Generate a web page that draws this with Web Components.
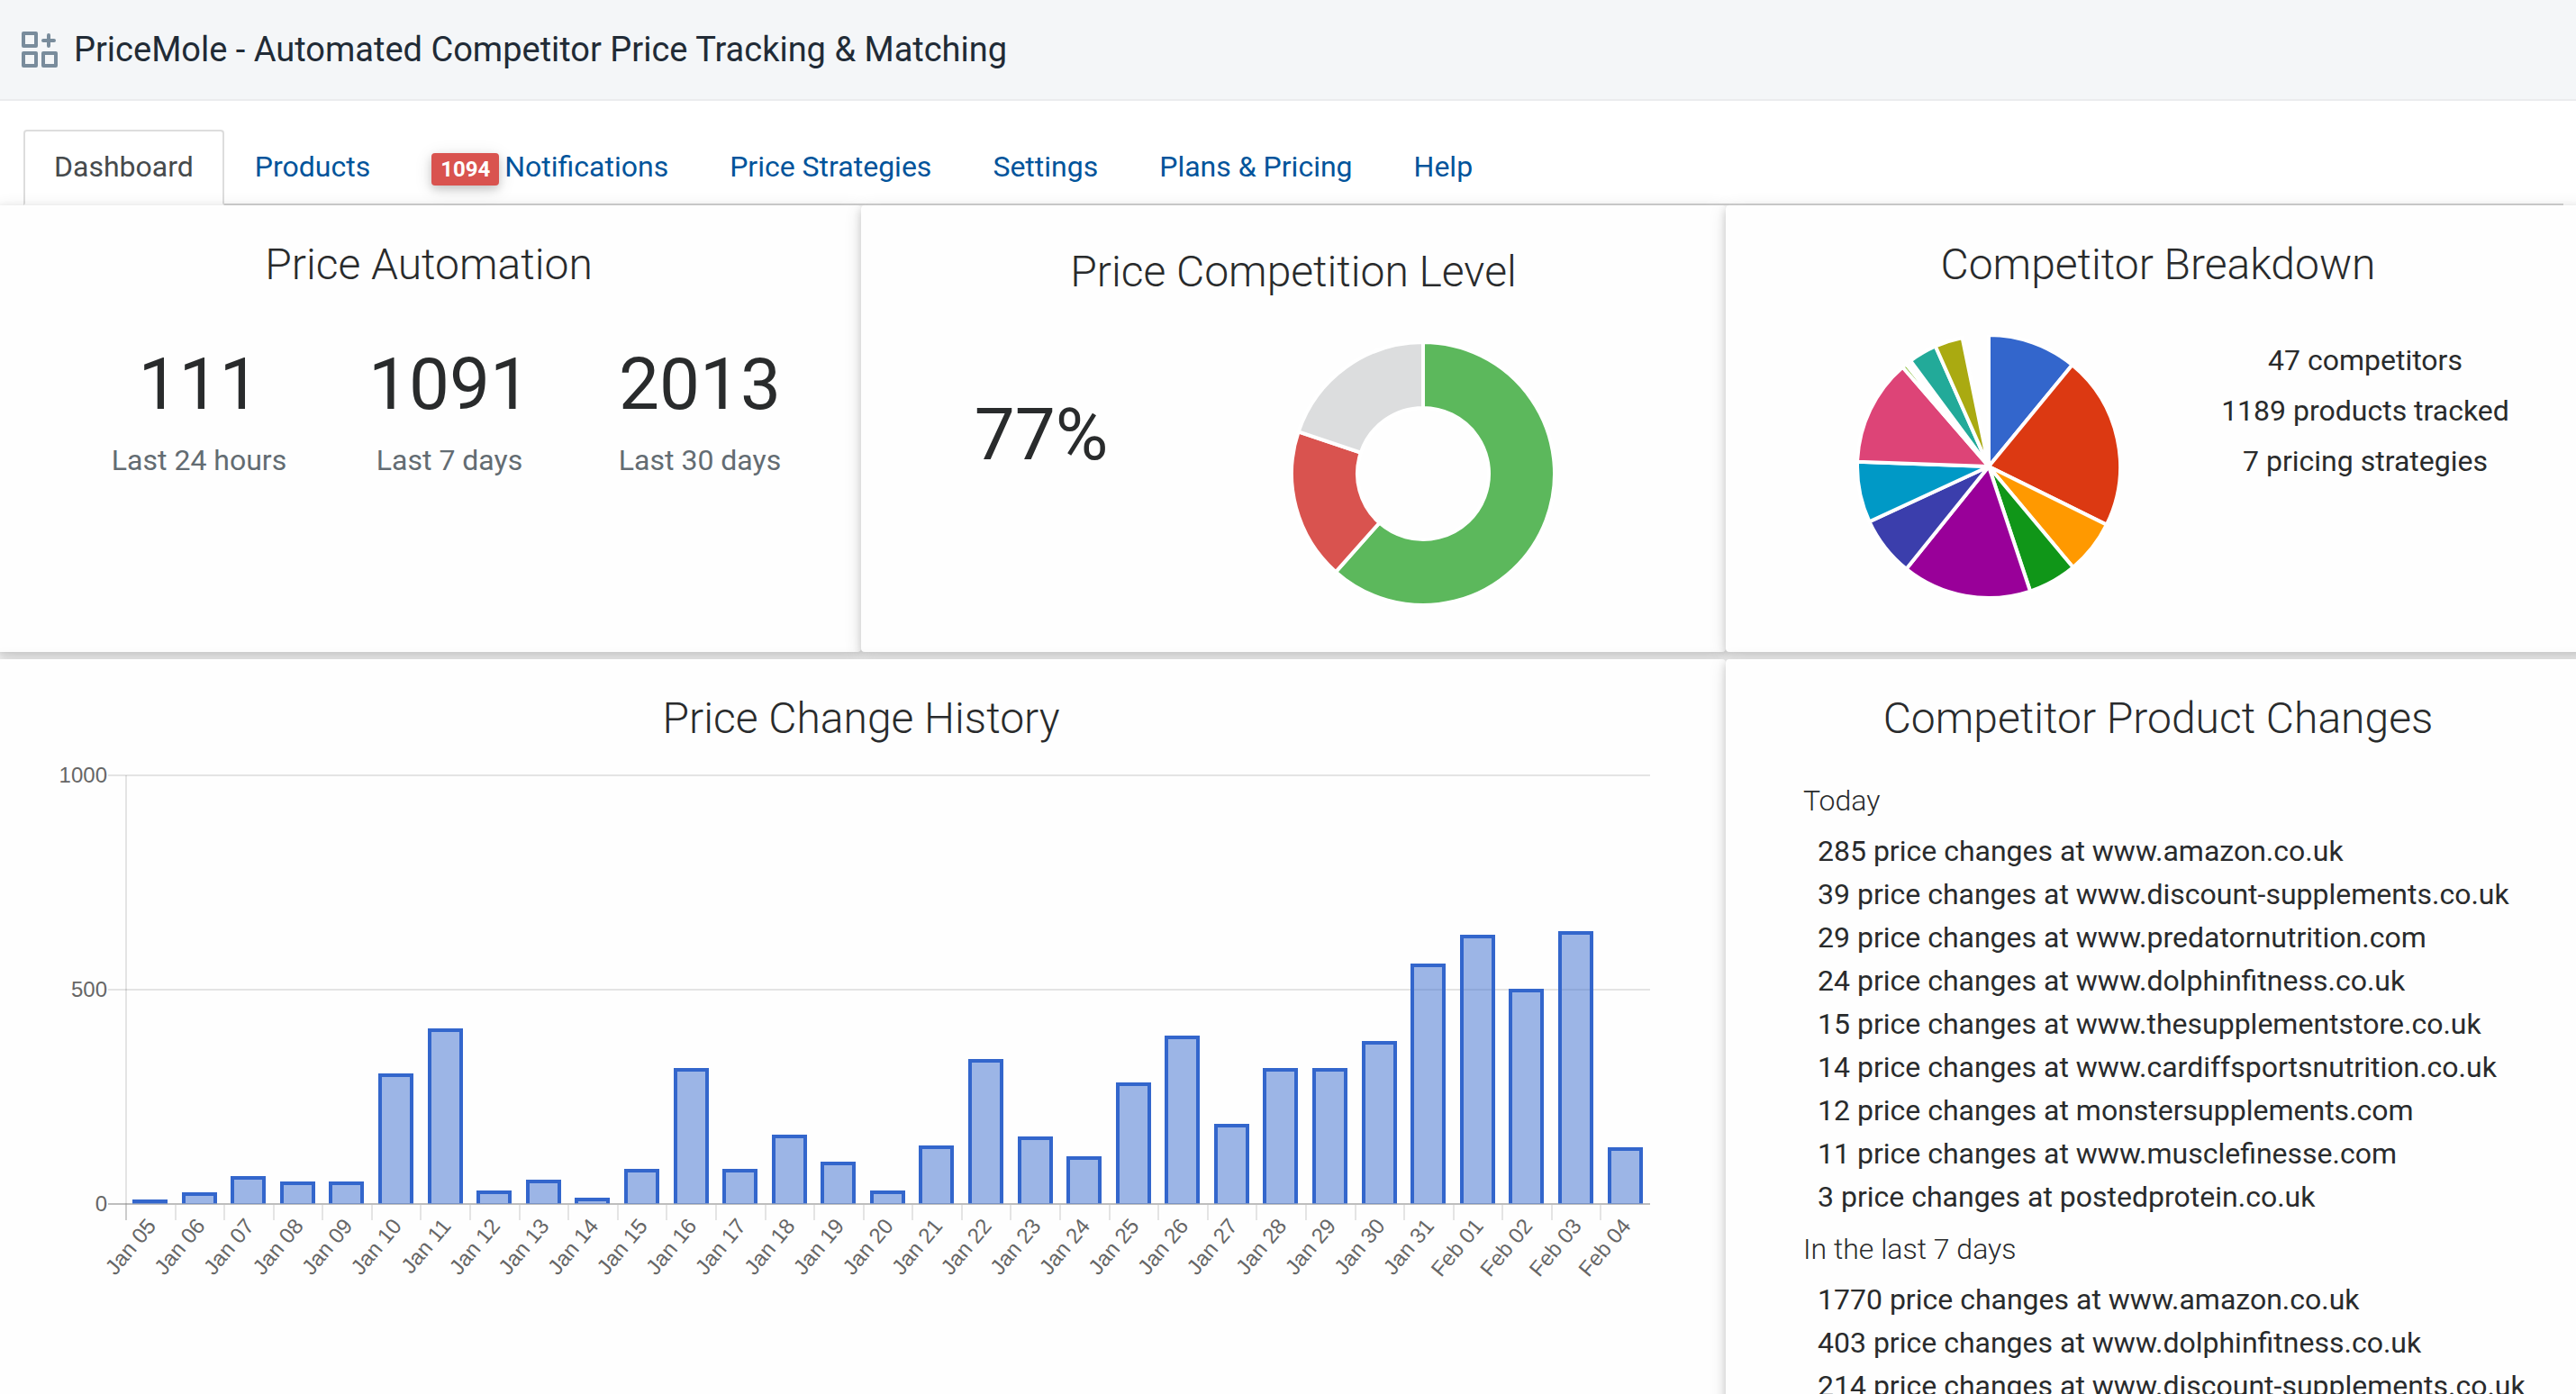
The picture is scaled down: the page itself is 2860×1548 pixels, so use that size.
<!DOCTYPE html>
<html lang="en">
<head>
<meta charset="utf-8">
<title>PriceMole</title>
<style>
  body {
    margin: 0;
    background: #fff;
    color: #292b2c;
    font-family: Roboto, "Liberation Sans", sans-serif;
    font-size: 32px;
    line-height: 48px;
  }
</style>
</head>
<body>
<price-app>
  <app-header slot="header">PriceMole - Automated Competitor Price Tracking &amp; Matching</app-header>
  <nav-tabs slot="nav">
    <nav-tab href="#dashboard" active>Dashboard</nav-tab>
    <nav-tab href="#products">Products</nav-tab>
    <nav-tab href="#notifications" badge="1094">Notifications</nav-tab>
    <nav-tab href="#strategies">Price Strategies</nav-tab>
    <nav-tab href="#settings">Settings</nav-tab>
    <nav-tab href="#plans">Plans &amp; Pricing</nav-tab>
    <nav-tab href="#help">Help</nav-tab>
  </nav-tabs>

  <dash-card heading="Price Automation">
    <stat-row>
      <stat-figure value="111">Last 24 hours</stat-figure>
      <stat-figure value="1091">Last 7 days</stat-figure>
      <stat-figure value="2013">Last 30 days</stat-figure>
    </stat-row>
  </dash-card>

  <dash-card heading="Price Competition Level" class="level">
    <competition-level>
      <stat-figure value="77%"></stat-figure>
      <pie-chart slot="chart" label="Price competition level" hole="73"
        stops="0 221.6 #5cb85c, 221.6 288.6 #d9534f, 288.6 360 #dcddde"></pie-chart>
    </competition-level>
  </dash-card>

  <dash-card heading="Competitor Breakdown">
    <competitor-breakdown>
      <pie-chart slot="chart" label="Competitor breakdown"
        stops="0 39.4 #3366cc, 39.4 116.3 #dc3912, 116.3 140.1 #ff9900, 140.1 161.6 #109618, 161.6 218.8 #990099, 218.8 245.2 #3b3eac, 245.2 272.1 #0099c6, 272.1 319.1 #dd4477, 319.1 321 #66aa00, 323.5 336.1 #22aa99, 336.1 348.4 #aaaa11"></pie-chart>
      <span>47 competitors</span>
      <span>1189 products tracked</span>
      <span>7 pricing strategies</span>
    </competitor-breakdown>
  </dash-card>

  <dash-card heading="Price Change History" class="wide">
    <bar-chart></bar-chart>
  </dash-card>

  <dash-card heading="Competitor Product Changes">
    <change-list>
      <change-group heading="Today">
        <li>285 price changes at www.amazon.co.uk</li>
        <li>39 price changes at www.discount-supplements.co.uk</li>
        <li>29 price changes at www.predatornutrition.com</li>
        <li>24 price changes at www.dolphinfitness.co.uk</li>
        <li>15 price changes at www.thesupplementstore.co.uk</li>
        <li>14 price changes at www.cardiffsportsnutrition.co.uk</li>
        <li>12 price changes at monstersupplements.com</li>
        <li>11 price changes at www.musclefinesse.com</li>
        <li>3 price changes at postedprotein.co.uk</li>
      </change-group>
      <change-group heading="In the last 7 days">
        <li>1770 price changes at www.amazon.co.uk</li>
        <li>403 price changes at www.dolphinfitness.co.uk</li>
        <li>214 price changes at www.discount-supplements.co.uk</li>
      </change-group>
    </change-list>
  </dash-card>
</price-app>

<script>
const define = (name, html, setup) => {
  const template = document.createElement('template');
  template.innerHTML = html;
  customElements.define(name, class extends HTMLElement {
    connectedCallback() {
      if (this.shadowRoot) return;
      const root = this.attachShadow({ mode: 'open' });
      root.append(template.content.cloneNode(true));
      if (setup) setup(this, root);
    }
  });
};

define('price-app', `
  <style>
    :host { display: flex; flex-direction: column; height: 100vh; overflow: hidden; }
    main {
      flex: 1;
      display: grid;
      grid-template-columns: repeat(3, minmax(0, 1fr));
      grid-template-rows: auto auto;
      row-gap: 8px;
      margin: 0 -16px 0 -4px;
    }
    ::slotted(.wide) { grid-column: span 2; }
    ::slotted(.level) { --card-top: 44px; }
  </style>
  <slot name="header"></slot>
  <slot name="nav"></slot>
  <main><slot></slot></main>`);

define('app-header', `
  <style>
    :host { display: block; background: #f4f6f8; border-bottom: 2px solid #ebecee; }
    header { display: flex; align-items: center; gap: 16px; height: 110px; padding: 0 22px; }
    svg { flex: none; }
    h1 { margin: 0; font: 400 38px/56px Roboto, "Liberation Sans", sans-serif; color: #212b36; }
  </style>
  <header>
    <svg width="44" height="44" viewBox="0 0 44 44" fill="none" stroke="#798c9c" stroke-width="4" stroke-linejoin="round" stroke-linecap="round" aria-hidden="true">
      <path d="M4 4h14v14H4zM4 26h14v14H4zM26 26h14v14H26zM32 6v12M26 12h12"/>
    </svg>
    <h1><slot></slot></h1>
  </header>`);

define('nav-tabs', `
  <style>
    :host { display: block; padding: 32px 14px 0 26px; }
    nav { display: flex; border-bottom: 2px solid #d4d4d4; }
  </style>
  <nav aria-label="Main"><slot></slot></nav>`);

define('nav-tab', `
  <style>
    :host { display: block; margin-bottom: -2px; }
    a {
      display: flex; align-items: center;
      padding: 15px 32px 17px;
      border: 2px solid transparent; border-radius: 4px 4px 0 0;
      color: #01549b; text-decoration: none; white-space: nowrap;
    }
    :host([active]) a { color: #464a4c; background: #fff; border-color: #ddd #ddd #fff; }
    .badge {
      margin: 6px 6px 0 0; padding: 0 10px;
      border-radius: 4px; background: #d9534f; color: #fff;
      font-size: 24px; font-weight: 700; line-height: 36px;
      box-shadow: 0 4px 10px rgba(0,0,0,.16), 0 4px 20px rgba(0,0,0,.12);
    }
  </style>
  <a><slot></slot></a>`, (host, root) => {
    const link = root.querySelector('a');
    link.href = host.getAttribute('href');
    if (host.hasAttribute('active')) link.setAttribute('aria-current', 'page');
    if (host.hasAttribute('badge')) {
      const badge = document.createElement('span');
      badge.className = 'badge';
      badge.textContent = host.getAttribute('badge');
      link.prepend(badge);
    }
  });

define('dash-card', `
  <style>
    :host {
      display: block;
      padding: var(--card-top, 36px) 0 52px;
      background: #fefefe; border-radius: 4px;
      box-shadow: 0 4px 10px rgba(0,0,0,.16), 0 4px 20px rgba(0,0,0,.12);
    }
    h2 { margin: 0; font-size: 48px; font-weight: 300; line-height: 60px; text-align: center; }
  </style>
  <h2></h2>
  <slot></slot>`, (host, root) => {
    root.querySelector('h2').textContent = host.getAttribute('heading');
  });

define('stat-row', `
  <style>
    :host { display: grid; grid-template-columns: repeat(3, 1fr); padding: 48px 40px 0 86px; }
  </style>
  <slot></slot>`);

define('stat-figure', `
  <style>
    :host { display: block; text-align: center; }
    strong { display: block; font-size: 80px; font-weight: 400; line-height: 110px; }
    span { display: block; color: #636c72; line-height: 58px; }
  </style>
  <strong></strong><span><slot></slot></span>`, (host, root) => {
    root.querySelector('strong').textContent = host.getAttribute('value');
  });

define('competition-level', `
  <style>
    :host { display: grid; grid-template-columns: 400fr 448fr 112fr; padding-top: 48px; }
    div { padding-top: 48px; }
  </style>
  <div><slot></slot></div>
  <slot name="chart"></slot>`);

define('competitor-breakdown', `
  <style>
    :host { display: grid; grid-template-columns: 1fr 1fr; padding: 48px 41px 0 83px; }
    div { display: flex; flex-direction: column; align-items: center; line-height: 56px; }
  </style>
  <slot name="chart"></slot>
  <div><slot></slot></div>`);

define('pie-chart', `
  <style>
    :host { display: flex; justify-content: center; }
  </style>
  <svg width="292" height="292" viewBox="-146 -146 292 292" role="img" stroke="#fff" stroke-width="4"></svg>`, (host, root) => {
    const R = 146, hole = Number(host.getAttribute('hole')) || 0;
    const at = (r, deg) => {
      const a = deg * Math.PI / 180;
      return (r * Math.sin(a)).toFixed(2) + ' ' + (-r * Math.cos(a)).toFixed(2);
    };
    const svg = root.querySelector('svg');
    svg.setAttribute('aria-label', host.getAttribute('label'));
    svg.innerHTML = host.getAttribute('stops').split(',').map(stop => {
      const [from, to, color] = stop.trim().split(' ');
      const large = to - from > 180 ? 1 : 0;
      const inner = hole ? `L${at(hole, to)}A${hole} ${hole} 0 ${large} 0 ${at(hole, from)}` : 'L0 0';
      return `<path fill="${color}" d="M${at(R, from)}A${R} ${R} 0 ${large} 1 ${at(R, to)}${inner}Z"/>`;
    }).join('');
  });

define('bar-chart', `
  <style>
    :host { display: block; margin: 0 84px 0 60px; }
    svg { display: block; width: 100%; height: 602px; overflow: visible; }
    text { font: 24px "Liberation Sans", Arial, sans-serif; fill: #666; text-anchor: end; }
  </style>
  <svg role="img" aria-label="Price changes per day"></svg>`, (host, root) => {
    const svg = root.querySelector('svg');
    const values = [10, 27, 65, 52, 52, 304, 409, 31, 57, 15, 82, 317, 82, 162, 99, 31, 136, 338,
      157, 111, 283, 393, 187, 317, 317, 380, 560, 628, 502, 636, 132];
    const days = values.map((v, i) => i < 27
      ? 'Jan ' + String(i + 5).padStart(2, '0')
      : 'Feb ' + String(i - 26).padStart(2, '0'));
    const left = 84, top = 33, base = 509;
    const draw = () => {
      const right = svg.clientWidth, step = (right - left) / values.length;
      let out = '';
      [1000, 500, 0].forEach(v => {
        const y = base - v * (base - top) / 1000;
        out += `<rect x="${left - 20}" y="${y - 1}" width="${right - left + 20}" height="2" fill="rgba(0,0,0,${v ? .1 : .25})"/>`;
        out += `<text x="${left - 21}" y="${y + 8}">${v}</text>`;
      });
      out += `<rect x="${left - 1}" y="${top}" width="2" height="${base - top + 18}" fill="rgba(0,0,0,.1)"/>`;
      values.forEach((v, i) => {
        const x = left + i * step, bx = Math.floor(x + step * .14), w = Math.round(step * .72);
        const y = Math.round(base - v * (base - top) / 1000);
        out += `<rect x="${Math.round(x) - 1}" y="${base + 1}" width="2" height="17" fill="rgba(0,0,0,.1)"/>`;
        out += `<rect x="${bx}" y="${y}" width="${w}" height="${base - y}" fill="rgba(51,102,204,.48)"/>`;
        out += `<path d="M${bx + 2} ${base - 1}V${y + 2}H${bx + w - 2}V${base - 1}" fill="none" stroke="#36c" stroke-width="4"/>`;
        out += `<text transform="translate(${x + step / 2 + 7} ${base + 25}) rotate(-50)">${days[i]}</text>`;
      });
      svg.innerHTML = out;
    };
    draw();
    new ResizeObserver(draw).observe(host);
  });

define('change-list', `
  <style>
    :host { display: block; padding: 27px 40px 0 86px; }
  </style>
  <slot></slot>`);

define('change-group', `
  <style>
    :host { display: block; padding-top: 10px; }
    h3 { margin: 0 0 8px; font-size: 32px; font-weight: 300; line-height: 48px; }
    ul { margin: 0; padding: 0 0 0 16px; list-style: none; white-space: nowrap; }
  </style>
  <h3></h3>
  <ul><slot></slot></ul>`, (host, root) => {
    root.querySelector('h3').textContent = host.getAttribute('heading');
  });
</script>
</body>
</html>
